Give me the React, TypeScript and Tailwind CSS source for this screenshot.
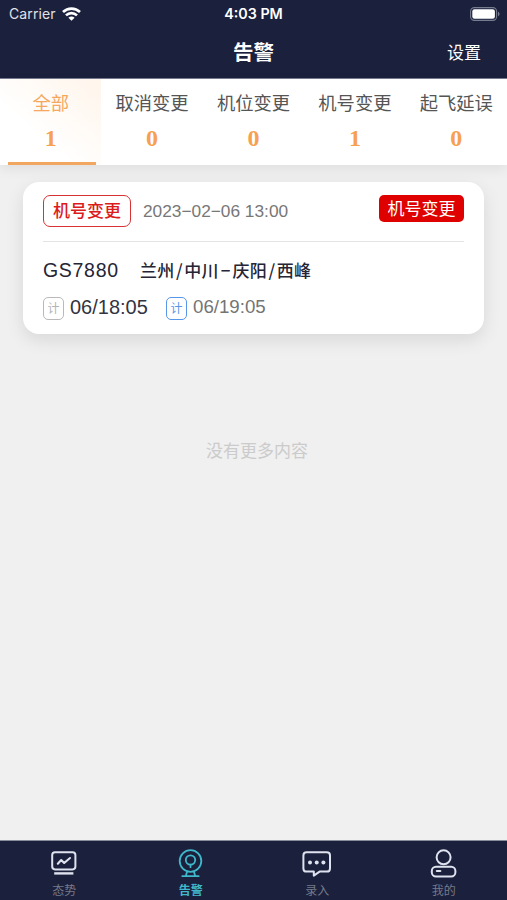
import type { ReactNode } from 'react';
import clsx from 'clsx';

const tabs = [
  { label: '全部', count: 1 },
  { label: '取消变更', count: 0 },
  { label: '机位变更', count: 0 },
  { label: '机号变更', count: 1 },
  { label: '起飞延误', count: 0 },
];

function WifiIcon() {
  return (
    <svg width="19" height="14" viewBox="0 0 19 14" fill="none" stroke="white" strokeWidth="2.7">
      <path d="M1 5C5.8 .4 13.2 .4 18 5" />
      <path d="M4 8.4C7.1 5.4 11.9 5.4 15 8.4" />
      <path d="M9.5 13.7 6.4 10.7C8.2 9.2 10.8 9.2 12.6 10.7Z" fill="white" stroke="none" />
    </svg>
  );
}

function BatteryIcon() {
  return (
    <svg width="30" height="14" viewBox="0 0 30 14" fill="none">
      <rect x=".6" y=".6" width="26" height="12.8" rx="3.8" stroke="#777c90" strokeWidth="1.1" />
      <rect x="2.3" y="2.3" width="22.6" height="9.4" rx="2.2" fill="white" />
      <path d="M28 4.8C30 5.5 30 8.5 28 9.2Z" fill="#777c90" />
    </svg>
  );
}

function TrendIcon() {
  return (
    <svg width="30" height="30" viewBox="0 0 30 30" fill="none" stroke="currentColor" strokeWidth="2" strokeLinejoin="round">
      <rect x="3.2" y="3.2" width="23.2" height="17.2" rx="2.8" />
      <path d="M8.8 14.7 12.2 11 15.2 14 21 9" strokeWidth="2.1" strokeLinecap="round" />
      <path d="M5.2 24.4H24.4" strokeWidth="2.4" />
    </svg>
  );
}

function AlarmIcon() {
  return (
    <svg width="30" height="30" viewBox="0 0 30 30" fill="none" stroke="currentColor" strokeWidth="1.8" strokeLinecap="round" strokeLinejoin="round">
      <circle cx="14.5" cy="12" r="10.8" />
      <circle cx="14.5" cy="11" r="4.7" />
      <path d="M14.5 15.7V18.2M11.1 22.6 9.9 26.8M17.9 22.6 19.1 26.8M6.3 27.2H22.7" />
    </svg>
  );
}

function MessageIcon() {
  return (
    <svg width="30" height="30" viewBox="0 0 30 30" fill="none" stroke="currentColor" strokeWidth="2" strokeLinejoin="round">
      <path d="M4.6 3.2H24.8Q28 3.2 28 6.4V19.4Q28 22.6 24.8 22.6H17.6L11.8 26.6V22.6H4.6Q1.4 22.6 1.4 19.4V6.4Q1.4 3.2 4.6 3.2Z" />
      <g fill="currentColor" stroke="none">
        <circle cx="8" cy="13.4" r="2" />
        <circle cx="14.7" cy="13.4" r="2" />
        <circle cx="21.4" cy="13.4" r="2" />
      </g>
    </svg>
  );
}

function ProfileIcon() {
  return (
    <svg width="30" height="30" viewBox="0 0 30 30" fill="none" stroke="currentColor" strokeWidth="2">
      <circle cx="14.6" cy="8.3" r="7" />
      <rect x="2.8" y="17.7" width="23.6" height="9.8" rx="4.2" />
      <path d="M7.8 21.9H11.4" strokeWidth="2" strokeLinecap="round" />
    </svg>
  );
}

const navItems: { label: string; icon: ReactNode; active?: boolean }[] = [
  { label: '态势', icon: <TrendIcon /> },
  { label: '告警', icon: <AlarmIcon />, active: true },
  { label: '录入', icon: <MessageIcon /> },
  { label: '我的', icon: <ProfileIcon /> },
];

function PlanBadge({ className }: { className: string }) {
  return (
    <span className={clsx('mt-[3px] flex h-[23px] w-[21px] items-center justify-center rounded-[5px] border pt-px text-[12px] leading-none', className)}>
      计
    </span>
  );
}

function Header() {
  return (
    <header className="h-[79px] shrink-0 border-b border-[#777b91] bg-[#1b203c] text-white">
      <div className="grid h-[27px] grid-cols-3 items-center px-[9px] font-[Inter,sans-serif] text-[14px]">
        <div className="flex items-center gap-[6px] text-[#e0e2e8]">
          <span className="tracking-[0.1px]">Carrier</span>
          <WifiIcon />
        </div>
        <span className="pt-px text-center text-[14.3px] font-semibold">4:03 PM</span>
        <div className="-mr-[2px] flex justify-end">
          <BatteryIcon />
        </div>
      </div>
      <div className="grid h-[51px] grid-cols-3 items-center pt-[2px]">
        <h1 className="col-start-2 text-center text-[20.5px] font-bold">告警</h1>
        <button className="pr-[26px] text-right text-[17px]">设置</button>
      </div>
    </header>
  );
}

function AlertCard() {
  return (
    <article className="mx-[23px] mt-[17px] h-[152px] rounded-[16px] bg-white px-5 pt-[13px] shadow-[0_6px_18px_rgba(0,0,0,0.10)]">
      <div className="flex h-[47px] items-start border-b border-[#e3e3e3]">
        <span className="flex h-8 w-[88px] items-center justify-center rounded-[7px] border-[1.5px] border-[#d83232] pt-px text-[17px] leading-none font-medium text-[#dc1b1b]">
          机号变更
        </span>
        <time className="ml-[12px] text-[17.3px] leading-8 text-[#777]">2023−02−06 13:00</time>
        <span className="ml-auto flex h-[27px] w-[85px] items-center justify-center rounded-[5px] bg-[#df0000] pt-px text-[17px] leading-none text-white">
          机号变更
        </span>
      </div>
      <div className="mt-[16px] flex h-[26px] items-center text-[#252535]">
        <span className="w-[97px] text-[19.5px] tracking-[0.7px]">GS7880</span>
        <span className="pb-[2px] font-['Noto_Sans_CJK_SC',sans-serif] text-[17px] font-medium tracking-[0.2px]">
          兰州<span className="px-[1.5px]">/</span>中川<span className="px-[2px]">−</span>庆阳<span className="px-[1.5px]">/</span>西峰
        </span>
      </div>
      <div className="mt-[10px] flex h-[26px] items-center text-[20px]">
        <PlanBadge className="border-[#b9b9b9] text-[#b5b5b5]" />
        <span className="ml-[6px] w-[96px] text-[#333440]">06/18:05</span>
        <PlanBadge className="border-[#5796e8] text-[#5796e8]" />
        <span className="ml-[6px] pt-px text-[18.7px] text-[#747474]">06/19:05</span>
      </div>
    </article>
  );
}

export default function App() {
  return (
    <div className="flex h-[900px] w-full flex-col bg-[#f0f0f0] font-['Liberation_Sans','Noto_Sans_CJK_SC',sans-serif]">
      <Header />
      <nav className="grid h-[86px] shrink-0 grid-cols-5 bg-white shadow-[0_4px_12px_rgba(0,0,0,0.07)]">
        {tabs.map((tab, index) => (
          <button
            key={tab.label}
            className={clsx(
              'flex flex-col items-center pt-[13px] whitespace-nowrap',
              index === 0 ? 'bg-linear-to-bl from-[#fff5eb] to-white to-65% text-[#f6a75e]' : 'text-[#555]',
            )}
          >
            <span className="text-[18.3px] leading-6">{tab.label}</span>
            <span className="mt-[8px] font-['Liberation_Serif',serif] text-[24px] leading-7 font-bold text-[#f7a052]">
              {tab.count}
            </span>
            {index === 0 && <span className="mt-auto ml-[2px] h-[3px] w-[88px] bg-[#f1a75f]" />}
          </button>
        ))}
      </nav>
      <main className="flex-1">
        <AlertCard />
        <p className="mt-[106px] pl-[7px] text-center text-[17px] leading-6 text-[#cbcbcb]">没有更多内容</p>
      </main>
      <footer className="grid h-[60px] shrink-0 grid-cols-4 border-t border-[#898c9b] bg-[#1b203c] pl-px">
        {navItems.map((item) => (
          <button
            key={item.label}
            className={clsx('flex flex-col items-center pt-[8px]', item.active ? 'text-[#40b8cb]' : 'text-[#dfe2ef]')}
          >
            {item.icon}
            <span className={clsx('mt-[4px] text-[12px] leading-4', item.active ? 'font-bold' : 'text-[#777a89]')}>{item.label}</span>
          </button>
        ))}
      </footer>
    </div>
  );
}
